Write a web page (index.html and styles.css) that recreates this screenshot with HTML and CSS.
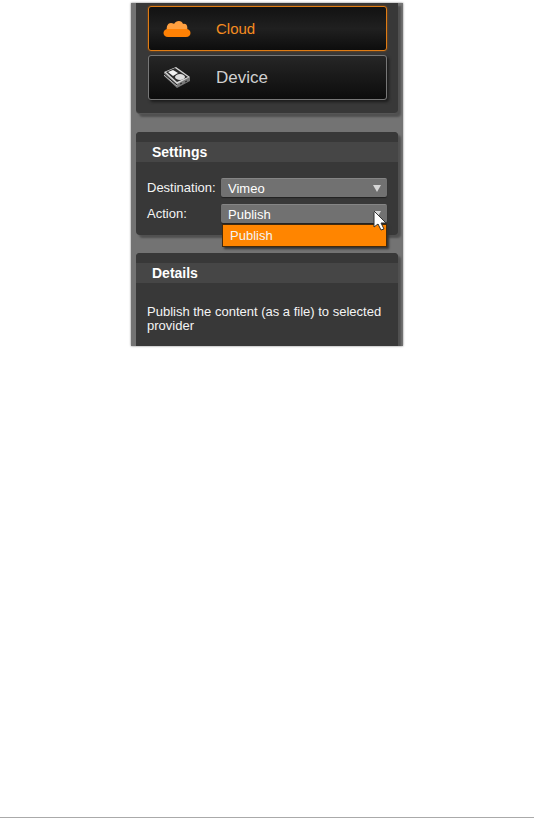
FILE: index.html
```html
<!DOCTYPE html>
<html lang="en">
<head>
    <meta charset="UTF-8">
    <title>Publish</title>
    <meta name="viewport" content="width=device-width, initial-scale=1.0">
    <link rel="stylesheet" href="styles.css">
</head>
<body>
    <main class="sidebar">
        <section class="panel targets">
            <button type="button" class="target active">
                <svg class="icon" viewBox="0 0 28 18" aria-hidden="true">
                    <path fill="#ffa040" d="M4 11C3 6 5 3 8 3C10 3 11 4 11 4C13 0 19 0 20 4C24 3 25 7 24 11Z"/>
                    <path fill="#ff8104" d="M5 9H23C29 9 29 17 23 17H5C-1 17 -1 9 5 9Z"/>
                </svg>
                Cloud
            </button>
            <button type="button" class="target">
                <svg class="icon device-icon" viewBox="0 0 28 21" aria-hidden="true">
                    <path fill="#777" d="M1 5L14 16L27 10V14L14 21L1 9Z"/>
                    <path fill="#d8d8d8" d="M1 5L13 0L27 10L14 17Z"/>
                    <path fill="#2c2c2c" d="M3 5L12 1L25 10L14 15Z"/>
                    <path fill="#f4f4f4" d="M5 5L10 3L15 6L10 9Z"/>
                    <ellipse cx="17" cy="10" rx="5" ry="3" fill="#dedede"/>
                    <path stroke="#bbb" d="M1 8L14 19"/>
                    <path stroke="#222" d="M1 7L14 18M17 17L19 16M22 15L24 14"/>
                </svg>
                Device
            </button>
        </section>

        <section class="panel settings">
            <h2>Settings</h2>
            <div class="field">
                <label for="destination">Destination:</label>
                <div class="dropdown">
                    <select id="destination">
                        <option>Vimeo</option>
                    </select>
                </div>
            </div>
            <div class="field">
                <label for="action">Action:</label>
                <div class="dropdown">
                    <select id="action">
                        <option>Publish</option>
                    </select>
                    <ul class="menu" role="listbox" aria-label="Action">
                        <li role="option" aria-selected="true">Publish</li>
                    </ul>
                    <svg class="cursor" viewBox="0 0 14 22" aria-hidden="true">
                        <path fill="#fff" stroke="#333" d="M1 1V17L5 14L8 20L11 19L8 13H13Z"/>
                    </svg>
                </div>
            </div>
        </section>

        <section class="panel details">
            <h2>Details</h2>
            <p>Publish the content (as a file) to selected provider</p>
        </section>
    </main>
    <hr class="page-rule">
</body>
</html>
```

FILE: styles.css
```css
:root {
    --panel: #383838;
    --band: #464646;
    --backdrop: #737373;
    --orange: #ff8500;
}

* {
    margin: 0;
    padding: 0;
    box-sizing: border-box;
}

body {
    display: flex;
    flex-direction: column;
    justify-content: space-between;
    align-items: center;
    min-height: 100vh;
    padding-top: 3px;
    background: #fff;
    color: #f4f4f4;
    font-family: "Liberation Sans", Arial, sans-serif;
    font-size: 13px;
}

.sidebar {
    display: flex;
    flex-direction: column;
    gap: 18px;
    width: 100%;
    max-width: 272px;
    padding: 0 5px;
    overflow: hidden;
    background: var(--backdrop);
    box-shadow: 0 0 2px #777;
}

.panel {
    border-radius: 4px;
    background: var(--panel);
    box-shadow: 3px 3px 2px #505050;
}

.targets {
    display: flex;
    flex-direction: column;
    gap: 4px;
    padding: 3px 11px 13px 12px;
    border-bottom: 1px solid #555;
    border-radius: 0 0 4px 4px;
}

.target {
    display: flex;
    align-items: center;
    gap: 25px;
    height: 45px;
    padding: 0 14px;
    border: 1px solid #777;
    border-radius: 3px;
    background: linear-gradient(#262626, #0c0c0c);
    box-shadow: 2px 2px 3px #1c1c1c;
    color: #d0d0d0;
    font-family: inherit;
    font-size: 17px;
    cursor: pointer;
}

.target.active {
    border-color: #e07c14;
    background: linear-gradient(#121212, #202020 50%, #0d0d0d);
    box-shadow: 0 0 2px #a85300;
    color: #f58c20;
    font-size: 15px;
}

.icon {
    width: 28px;
    height: 18px;
    fill: none;
}

.device-icon {
    height: 21px;
}

.settings {
    padding-bottom: 12px;
}

.panel h2 {
    margin-bottom: 16px;
    padding: 0 16px;
    border-top: 10px solid var(--panel);
    border-radius: 4px 4px 0 0;
    background: var(--band);
    color: #fff;
    font-size: 14px;
    line-height: 20px;
}

.field {
    display: flex;
    align-items: center;
    padding: 0 11px;
}

.field + .field {
    margin-top: 7px;
}

.field label {
    width: 74px;
}

.dropdown {
    position: relative;
    flex: 1;
}

.dropdown::after {
    content: "";
    position: absolute;
    top: 7px;
    right: 6px;
    border: 4px solid transparent;
    border-top: 7px solid #d6d6d6;
    border-bottom: 0;
    pointer-events: none;
}

select {
    display: block;
    width: 100%;
    height: 19px;
    padding: 0 7px;
    appearance: none;
    border: 0;
    border-top: 1px solid #858585;
    border-radius: 2px;
    background: #717171;
    box-shadow: 0 1px 1px #222;
    color: #fff;
    font-family: inherit;
    font-size: 13px;
}

.menu {
    position: absolute;
    top: 20px;
    left: 1px;
    right: 0;
    z-index: 1;
    border: 1px solid #442a0c;
    background: var(--orange);
    box-shadow: 2px 2px 2px #333;
    list-style: none;
}

.menu li {
    padding: 0 7px;
    line-height: 21px;
}

.cursor {
    position: absolute;
    top: 6px;
    right: 0;
    z-index: 2;
    width: 14px;
    height: 22px;
}

.details {
    padding-bottom: 13px;
    border-radius: 4px 4px 0 0;
}

.details h2 {
    margin-bottom: 22px;
}

.details p {
    padding: 0 11px;
    line-height: 14px;
}

.page-rule {
    width: 100%;
    border: 0;
    border-top: 1px solid #aaa;
}
```
